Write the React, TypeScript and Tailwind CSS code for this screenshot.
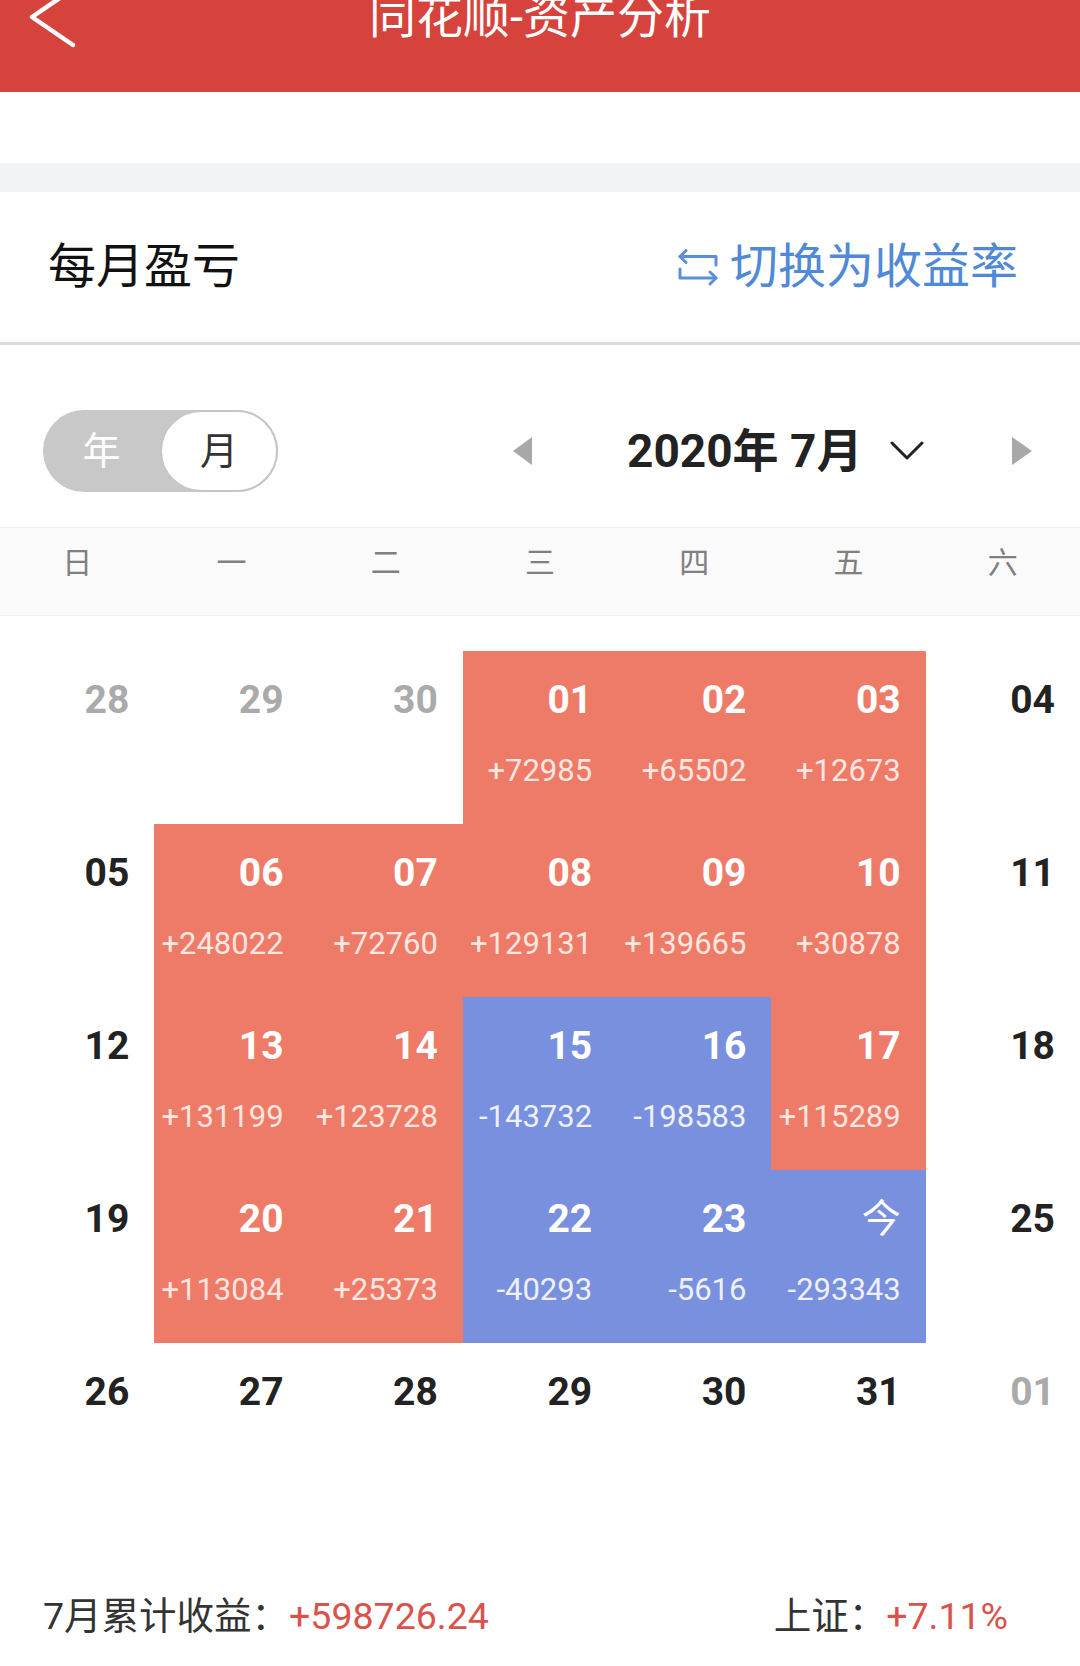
import React from 'react';

type Cell = { d: string; v?: string; c?: 'r' | 'b'; muted?: boolean };

const rows: Cell[][] = [
  [
    { d: '28', muted: true },
    { d: '29', muted: true },
    { d: '30', muted: true },
    { d: '01', v: '+72985', c: 'r' },
    { d: '02', v: '+65502', c: 'r' },
    { d: '03', v: '+12673', c: 'r' },
    { d: '04' },
  ],
  [
    { d: '05' },
    { d: '06', v: '+248022', c: 'r' },
    { d: '07', v: '+72760', c: 'r' },
    { d: '08', v: '+129131', c: 'r' },
    { d: '09', v: '+139665', c: 'r' },
    { d: '10', v: '+30878', c: 'r' },
    { d: '11' },
  ],
  [
    { d: '12' },
    { d: '13', v: '+131199', c: 'r' },
    { d: '14', v: '+123728', c: 'r' },
    { d: '15', v: '-143732', c: 'b' },
    { d: '16', v: '-198583', c: 'b' },
    { d: '17', v: '+115289', c: 'r' },
    { d: '18' },
  ],
  [
    { d: '19' },
    { d: '20', v: '+113084', c: 'r' },
    { d: '21', v: '+25373', c: 'r' },
    { d: '22', v: '-40293', c: 'b' },
    { d: '23', v: '-5616', c: 'b' },
    { d: '今', v: '-293343', c: 'b' },
    { d: '25' },
  ],
  [
    { d: '26' },
    { d: '27' },
    { d: '28' },
    { d: '29' },
    { d: '30' },
    { d: '31' },
    { d: '01', muted: true },
  ],
];

const weekdays = ['日', '一', '二', '三', '四', '五', '六'];

function DayCell({ cell }: { cell: Cell }) {
  const bg = cell.c === 'r' ? 'bg-[#ee7b68]' : cell.c === 'b' ? 'bg-[#7890de]' : 'bg-white';
  const numColor = cell.c ? 'text-white' : cell.muted ? 'text-[#aaaaaa]' : 'text-[#222222]';
  const isToday = cell.d === '今';
  return (
    <div className={`h-[173px] flex flex-col items-end pr-[25px] pt-[30px] ${bg}`}>
      <div
        className={`text-[39px] leading-[39px] ${isToday ? 'font-normal' : 'font-bold'} ${numColor}`}
      >
        {cell.d}
      </div>
      {cell.v && (
        <div
          className={`mt-[35px] text-[31px] leading-[31px] ${
            cell.c === 'r' ? 'text-[#fde6e0]' : 'text-[#eef0fb]'
          }`}
        >
          {cell.v}
        </div>
      )}
    </div>
  );
}

export default function App() {
  return (
    <div className="w-[1080px] min-h-[1666px] bg-white font-['Roboto','Noto_Sans_CJK_SC',sans-serif] overflow-hidden">
      {/* 顶部导航 */}
      <div className="h-[92px] bg-[#d5433c] overflow-hidden">
        <div className="-mt-[21px] h-[76px] grid grid-cols-[1fr_auto_1fr] items-center">
          <div className="pl-[28px] flex items-center">
            <svg width="50" height="62" viewBox="0 0 50 62" fill="none">
              <path
                d="M45 3 L4 31 L45 59"
                stroke="#ffffff"
                strokeWidth="4.5"
                strokeLinecap="round"
                strokeLinejoin="round"
              />
            </svg>
          </div>
          <div className="text-white text-[47px] leading-[76px] font-normal">同花顺-资产分析</div>
          <div />
        </div>
      </div>

      <div className="h-[71px] bg-white" />
      <div className="h-[29px] bg-[#f2f3f5]" />

      {/* 每月盈亏 */}
      <div className="h-[153px] flex items-center justify-between pl-[48px] pr-[62px] border-b-[3px] border-[#dcdcdc]">
        <div className="text-[48px] leading-[48px] text-[#111111]">每月盈亏</div>
        <div className="flex items-center text-[#5089d6]">
          <svg width="44" height="40" viewBox="0 0 44 40" fill="none" className="mr-[10px]">
            <path d="M10 3.5 L4 9.5 L10 15.5" stroke="#5b8fd8" strokeWidth="3" strokeLinecap="round" strokeLinejoin="round" />
            <path d="M4 9.5 H40 V18" stroke="#5b8fd8" strokeWidth="3" strokeLinecap="round" strokeLinejoin="round" />
            <path d="M4 22 V31 H40" stroke="#5b8fd8" strokeWidth="3" strokeLinecap="round" strokeLinejoin="round" />
            <path d="M34 25 L40 31 L34 37" stroke="#5b8fd8" strokeWidth="3" strokeLinecap="round" strokeLinejoin="round" />
          </svg>
          <span className="text-[48px] leading-[48px]">切换为收益率</span>
        </div>
      </div>

      {/* 年/月 切换与日期选择 */}
      <div className="flex items-center pt-[65px] pb-[35px]">
        <div className="ml-[43px] w-[235px] h-[82px] rounded-full bg-[#c8c8c8] flex">
          <div className="flex-1 flex items-center justify-center text-white text-[38px]">年</div>
          <div className="w-[118px] h-full rounded-full bg-white border-2 border-[#c6c6c6] flex items-center justify-center text-[#333333] text-[38px]">
            月
          </div>
        </div>
        <svg width="19" height="28" viewBox="0 0 19 28" className="ml-[235px]">
          <path d="M19 0 L0 14 L19 28 Z" fill="#a8a8a8" />
        </svg>
        <div className="ml-[95px] text-[46px] leading-[46px] font-bold text-[#222222] whitespace-pre">2020年 7月</div>
        <svg width="34" height="20" viewBox="0 0 34 20" fill="none" className="ml-[28px]">
          <path d="M2 2 L17 17 L32 2" stroke="#222222" strokeWidth="3" strokeLinecap="round" strokeLinejoin="round" />
        </svg>
        <svg width="20" height="28" viewBox="0 0 20 28" className="ml-[88px]">
          <path d="M0 0 L20 14 L0 28 Z" fill="#a8a8a8" />
        </svg>
      </div>

      {/* 星期 */}
      <div className="h-[89px] grid grid-cols-7 bg-[#fafafa] border-y border-[#efefef]">
        {weekdays.map((w) => (
          <div key={w} className="flex justify-center pt-[20px] text-[30px] leading-[30px] text-[#808080]">
            {w}
          </div>
        ))}
      </div>

      {/* 日历 */}
      <div className="mt-[35px] grid grid-cols-7">
        {rows.flat().map((cell, i) => (
          <DayCell key={i} cell={cell} />
        ))}
      </div>

      {/* 底部汇总 */}
      <div className="flex items-center justify-between pl-[43px] pr-[72px] pt-[82px] pb-[33px] text-[37.5px] leading-[37.5px]">
        <div className="text-[#333333]">
          7月累计收益：<span className="text-[#d9534c]">+598726.24</span>
        </div>
        <div className="text-[#333333]">
          上证：<span className="text-[#d9534c]">+7.11%</span>
        </div>
      </div>
    </div>
  );
}
